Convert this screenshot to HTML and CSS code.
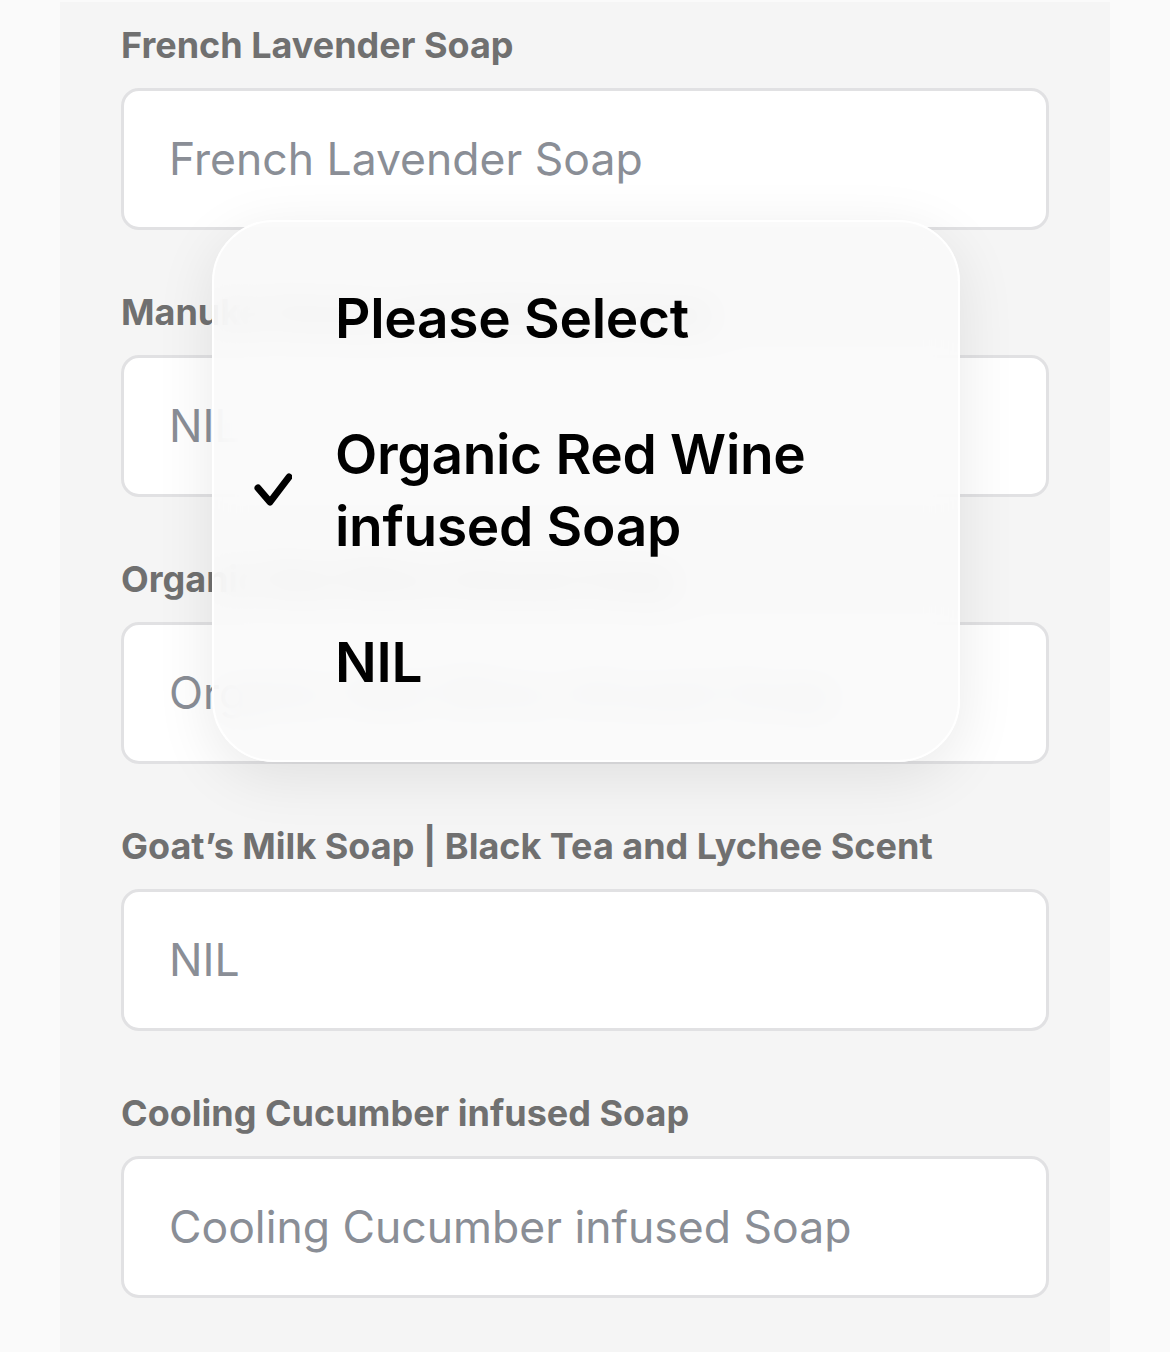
FILE: index.html
```html
<!DOCTYPE html>
<html lang="en">
  <head>
    <meta charset="UTF-8" />
    <meta name="viewport" content="width=device-width, initial-scale=1.0" />
    <title>Soap Selection</title>
    <link rel="stylesheet" href="styles.css">
  </head>
  <body>
    <div class="panel">
      <div class="field">
        <label class="label">French Lavender Soap</label>
        <input class="input" type="text" placeholder="French Lavender Soap" />
      </div>
      <div class="field">
        <label class="label">Manuka Honey and Oatmeal Soap</label>
        <input class="input" type="text" placeholder="NIL" />
      </div>
      <div class="field">
        <label class="label">Organic Red Wine infused Soap</label>
        <input class="input" type="text" placeholder="Organic Red Wine infused Soap" />
      </div>
      <div class="field">
        <label class="label">Goat’s Milk Soap | Black Tea and Lychee Scent</label>
        <input class="input" type="text" placeholder="NIL" />
      </div>
      <div class="field">
        <label class="label">Cooling Cucumber infused Soap</label>
        <input class="input" type="text" placeholder="Cooling Cucumber infused Soap" />
      </div>
    </div>

    <!-- native picker open over the third field -->
    <ul class="picker">
      <li class="option">
        <span class="check"></span>
        <span class="option-text">Please Select</span>
      </li>
      <li class="option selected">
        <span class="check">
          <svg width="40" height="40" viewBox="0 0 40 40">
            <path d="M6 18 L18 32 L37 7" fill="none" stroke="#000" stroke-width="7" stroke-linecap="round" stroke-linejoin="round"/>
          </svg>
        </span>
        <span class="option-text">Organic Red Wine<br>infused Soap</span>
      </li>
      <li class="option">
        <span class="check"></span>
        <span class="option-text">NIL</span>
      </li>
    </ul>
  </body>
</html>
```

FILE: styles.css
```css
* {
  margin: 0;
  padding: 0;
  box-sizing: border-box;
}
body {
  background-color: #fafafa;
  font-family: Inter, "Noto Sans", sans-serif;
  height: 1352px;
  overflow: hidden;
  padding-top: 2px;
}
.panel {
  width: 1050px;
  margin-left: 60px;
  min-height: 1350px;
  background-color: #f5f5f5;
  padding: 23px 61px 0 61px;
  display: flex;
  flex-direction: column;
  gap: 62px;
}
.field {
  display: flex;
  flex-direction: column;
  gap: 23px;
}
.label {
  font-size: 36px;
  line-height: 40px;
  font-weight: 700;
  color: #707070;
}
.input {
  width: 928px;
  height: 142px;
  border: 3px solid #e1e1e3;
  border-radius: 18px;
  background-color: #fff;
  padding: 0 45px;
  font-family: Inter, "Noto Sans", sans-serif;
  font-size: 44.5px;
  color: #333;
  outline: none;
}
.input::placeholder {
  color: #8a8e96;
}
.picker {
  list-style: none;
  position: absolute;
  left: 212px;
  top: 220px;
  width: 748px;
  height: 542px;
  border-radius: 62px;
  border: 2px solid #fff;
  background-color: rgba(249, 249, 249, 0.9);
  backdrop-filter: blur(18px);
  box-shadow: 0 14px 60px rgba(0, 0, 0, 0.09);
  padding: 28px 0;
  display: flex;
  flex-direction: column;
}
.option {
  display: flex;
  align-items: center;
  padding: 32px 0;
}
.check {
  width: 121px;
  padding-left: 38px;
  display: flex;
  align-items: center;
}
.option-text {
  font-size: 55px;
  line-height: 72px;
  font-weight: 600;
  color: #000;
  letter-spacing: -0.3px;
}
```
